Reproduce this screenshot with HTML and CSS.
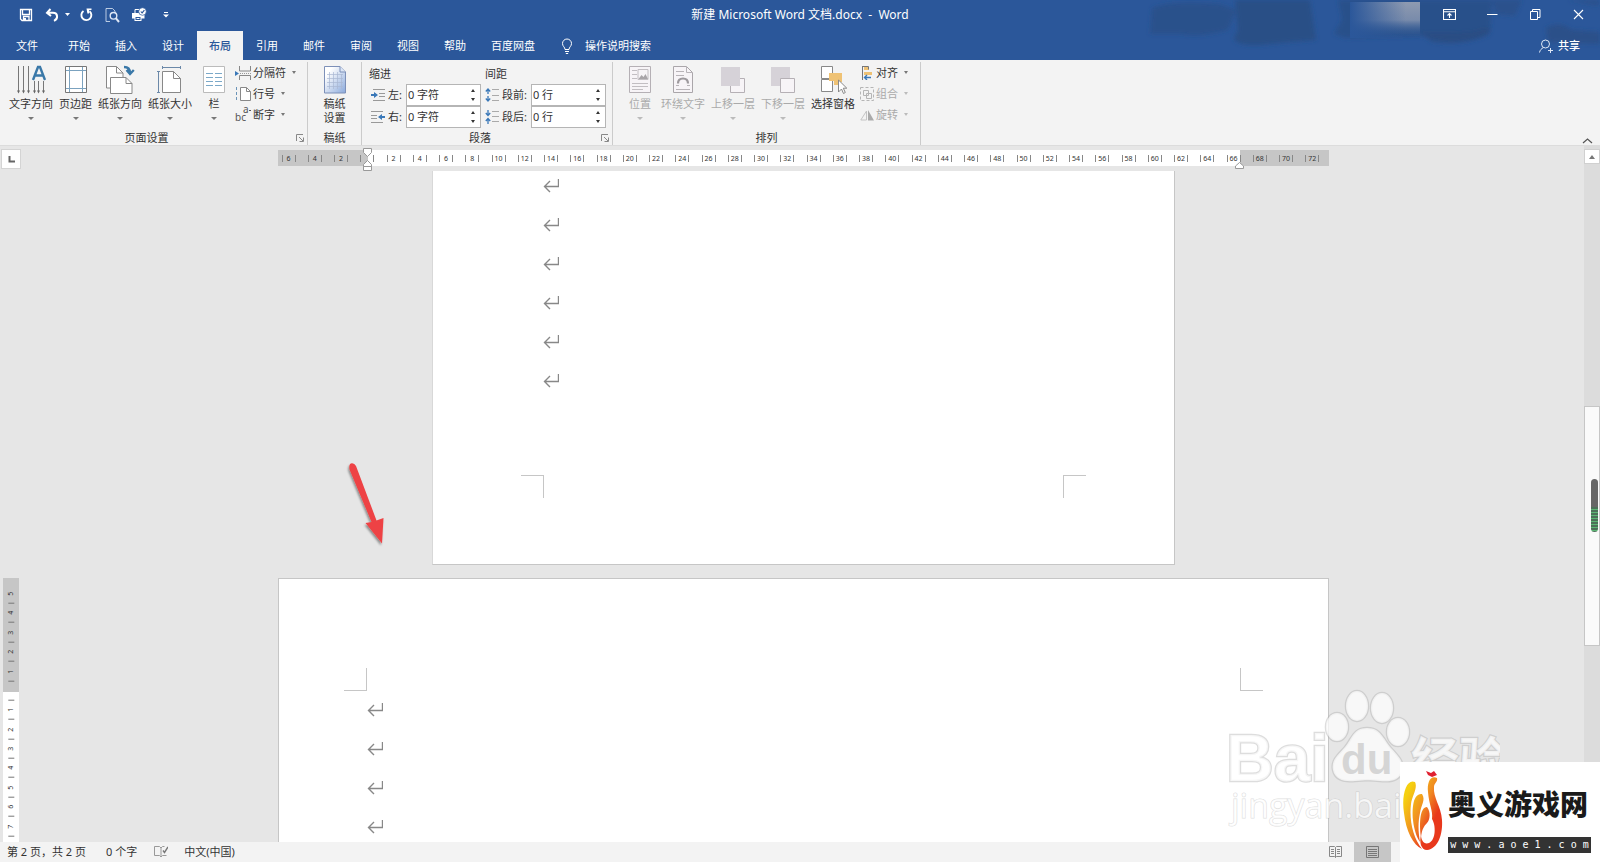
FILE: index.html
```html
<!DOCTYPE html>
<html lang="zh-CN">
<head>
<meta charset="utf-8">
<title>新建 Microsoft Word 文档.docx - Word</title>
<link rel="stylesheet" href="styles.css">
</head>
<body>
<div class="app">
  <header class="header">
    <svg class="header-art" width="480" height="60" viewBox="0 0 480 60" aria-hidden="true">
      <defs>
        <filter id="soft"><feGaussianBlur stdDeviation="2"/></filter>
        <linearGradient id="fadeV" x1="0" y1="0" x2="0" y2="1"><stop offset="0" stop-color="#9aa3b5" stop-opacity=".9"/><stop offset=".5" stop-color="#8d9ab3" stop-opacity=".8"/><stop offset="1" stop-color="#2b579a" stop-opacity="0"/></linearGradient>
        <linearGradient id="fadeH" x1="0" y1="0" x2="1" y2="0"><stop offset="0" stop-color="#2b579a"/><stop offset=".25" stop-color="#2b579a" stop-opacity=".7"/><stop offset=".8" stop-color="#2b579a" stop-opacity="0"/></linearGradient>
      </defs>
      <g filter="url(#soft)" fill="#294c80">
        <path d="M32 8 Q50 0 100 4 L116 10 L108 30 Q80 38 60 34 L30 34 Z" opacity=".55"/>
        <path d="M115 0 H190 L196 40 Q170 42 140 45 Q115 46 114 38 L118 30 Z" opacity=".75"/>
        <path d="M218 0 H372 L370 32 Q350 44 330 42 L300 36 L225 38 L214 34 L222 20 Z" opacity=".6"/>
        <path d="M300 32 Q350 34 364 28 Q376 28 366 36 Q340 46 312 42 Z" opacity=".7"/>
        <path d="M372 0 H402 L395 16 L376 14 Z M448 0 H480 L478 6 Z" opacity=".5"/>
        <path d="M426 28 Q440 20 452 30 L480 32 V44 L428 42 Z" opacity=".65"/>
      </g>
      <rect x="230" y="2" width="70" height="36" fill="url(#fadeV)"/>
      <rect x="230" y="2" width="70" height="36" fill="url(#fadeH)"/>
    </svg>
    <div class="titlebar">
      <div class="quick">
        <button class="qbtn" aria-label="保存"><svg width="14" height="14" viewBox="0 0 14 14"><path d="M1.500 1.500h11v11H3l-1.500-1.500zM3.500 1.500v5h7v-5M4.500 12.500v-4h5.500v4" fill="none" stroke="#fff" stroke-width="1.300"/><path d="M5 10h2v2.500H5z" fill="#fff"/></svg></button>
        <button class="qbtn undo" aria-label="撤消"><svg width="14" height="14" viewBox="0 0 14 14"><path d="M5.500 1L2 4.800l4 3.200M2 4.800h6c5 0 5.500 6 1 8" fill="none" stroke="#fff" stroke-width="2"/></svg><svg width="5" height="3" viewBox="0 0 5 3"><path d="M0 0h5L2.500 3z" fill="#fff"/></svg></button>
        <button class="qbtn redo" aria-label="重复"><svg width="14" height="14" viewBox="0 0 14 14"><path d="M10.500 3.200A5 5 0 1 1 4.500 3" fill="none" stroke="#fff" stroke-width="1.900"/><path d="M7.500 0.500h5v1.600h-2.300l-.2 3.400H8.400z" fill="#fff"/></svg></button>
        <button class="qbtn" aria-label="打印预览"><svg width="16" height="16" viewBox="0 0 16 16" fill="none" stroke="#dfe8f6"><path d="M6 14.500H2v-13h6.500L11 4v2" stroke-width=".8"/><circle cx="9.500" cy="8.800" r="3.300" stroke-width="1.400"/><path d="M11.800 11.200L15 15" stroke-width="2"/></svg></button>
        <button class="qbtn print" aria-label="快速打印"><svg width="16" height="16" viewBox="0 0 16 16"><path d="M1 6h11l1.500 1.500v4h-3V14h-7v-2.500H1z" fill="#fff"/><path d="M4 6V2.500h5V6" fill="none" stroke="#fff"/><path d="M4.500 10h5v3h-5z" fill="#2b579a"/><path d="M5.500 11.500h3" stroke="#fff"/><circle cx="11.500" cy="4.500" r="3.800" fill="#fff" stroke="#2b579a" stroke-width=".7"/><path d="M9.800 4.500l1.300 1.400 2.300-2.800" fill="none" stroke="#2b579a" stroke-width="1.100"/></svg></button>
        <button class="qbtn more" aria-label="自定义快速访问工具栏"><svg width="6" height="6" viewBox="0 0 6 6" fill="#fff"><path d="M1 0h4v1H1zM0 2.500h6L3 5.500z"/></svg></button>
      </div>
      <h1 class="doc-title">新建 Microsoft Word 文档.docx&nbsp; -&nbsp; Word</h1>
      <div class="window-btns">
        <button aria-label="功能区显示选项"><svg width="13" height="11" viewBox="0 0 13 11" fill="none" stroke="#fff"><path d="M.5.500h12v10H.5zM.5 2.800h12M6.500 9V4.800M4.500 6.500l2-2 2 2" stroke-width="1.100"/></svg></button>
        <button aria-label="最小化"><svg width="11" height="11" viewBox="0 0 11 11"><path d="M0 5.500h10.500" stroke="#fff"/></svg></button>
        <button aria-label="还原"><svg width="11" height="11" viewBox="0 0 11 11" fill="none" stroke="#fff"><path d="M.5 2.500h7v8h-7zM2.500 2.500v-2h7.500v8H7.500"/></svg></button>
        <button aria-label="关闭"><svg width="11" height="11" viewBox="0 0 11 11"><path d="M1 1l9 9M10 1l-9 9" stroke="#fff" stroke-width="1.100"/></svg></button>
      </div>
    </div>
    <nav class="tabs">
      <button class="tab file">文件</button>
      <button class="tab">开始</button>
      <button class="tab">插入</button>
      <button class="tab">设计</button>
      <button class="tab active">布局</button>
      <button class="tab">引用</button>
      <button class="tab">邮件</button>
      <button class="tab">审阅</button>
      <button class="tab">视图</button>
      <button class="tab">帮助</button>
      <button class="tab">百度网盘</button>
      <button class="tab tell"><svg width="12" height="16" viewBox="0 0 12 16" fill="none" stroke="#fff"><path d="M4 11.500C4 9 1.500 8.500 1.500 5.500a4.500 4.500 0 0 1 9 0C10.500 8.500 8 9 8 11.500zM4 13.500h4M4.800 15.500h2.400"/></svg>操作说明搜索</button>
      <button class="tab share"><svg width="14" height="14" viewBox="0 0 14 14" fill="none" stroke="#dfe8f6"><circle cx="6.500" cy="5" r="4"/><path d="M.5 13.500C1 11 2.500 9.500 4.500 8.600M9 11.500h5M11.500 9v5"/></svg>共享</button>
    </nav>
  </header>

  <section class="ribbon" aria-label="布局">
    <div class="group">
      <div class="group-body setup">
        <button class="big"><svg width="30" height="30" viewBox="0 0 30 30"><path d="M2.500 1v25M7.500 1v25M12.500 1v25M18.500 16v10M22.500 16v10M27.500 16v10" stroke="#777" fill="none"/><path d="M1 25.500h3l-1.500 3zM6 25.500h3l-1.500 3zM11 25.500h3l-1.500 3zM17 25.500h3l-1.500 3zM21 25.500h3l-1.500 3zM26 25.500h3l-1.500 3z" fill="#666"/><path d="M17 15L22 2h2l5 13M19 10.500h8" fill="none" stroke="#3a78a8" stroke-width="2.400"/></svg><span>文字方向</span><i class="caret"></i></button>
        <button class="big"><svg width="22" height="30" viewBox="0 0 22 30" fill="none"><path d="M.5 1.500h21v26H.5z" fill="#fff" stroke="#777"/><path d="M4.500 2v25M17.500 2v25M1 5.500h20M1 23.500h20" stroke="#7ba2bf"/></svg><span>页边距</span><i class="caret"></i></button>
        <button class="big"><svg width="30" height="30" viewBox="0 0 30 30" stroke="#888" fill="#fff"><path d="M1.500 1.500h10L18 8v15H1.500z"/><path d="M11.500 1.500V8H18" fill="none"/><path d="M5.500 12.500H21l6 6v10H5.500z"/><path d="M21 12.500v6h6" fill="none"/><path d="M19 2q6 0 6 6M21.500 5l3.500 4 3.800-4" fill="none" stroke="#3a78a8" stroke-width="2.300"/></svg><span>纸张方向</span><i class="caret"></i></button>
        <button class="big"><svg width="26" height="30" viewBox="0 0 26 30" fill="none"><path d="M5.500 6.500h11l7 7v14h-18z" fill="#fff" stroke="#888"/><path d="M16.500 6.500v7h7" stroke="#888"/><path d="M5 2.500h19M5.500 1v3M23.500 1v3M1.500 6v22M0 6.500h3M0 27.500h3" stroke="#6b88a8"/></svg><span>纸张大小</span><i class="caret"></i></button>
        <button class="big columns"><svg width="22" height="30" viewBox="0 0 22 30" fill="none"><path d="M.5 1.500h21v26H.5z" fill="#fff" stroke="#bbb"/><path d="M3 8.500h7M12 8.500h7M3 12.500h7M12 12.500h7M3 16.500h7M12 16.500h7M3 20.500h7M12 20.500h7" stroke="#7ba8c8"/></svg><span>栏</span><i class="caret"></i></button>
        <div class="stack">
          <button class="small"><svg width="16" height="14" viewBox="0 0 16 14" fill="none"><path d="M4.500 0v5h11V0M4.500 14V9.500h11V14" stroke="#888"/><path d="M5 7.500h11" stroke="#999" stroke-dasharray="1 1"/><path d="M0 5l4 2.500L0 10z" fill="#3a78b8"/></svg>分隔符<i class="caret"></i></button>
          <button class="small"><svg width="16" height="14" viewBox="0 0 16 14" fill="none"><path d="M5.500.500h6l4 4v9h-10z" fill="#fff" stroke="#888"/><path d="M11.500.500v4h4" stroke="#888"/><path d="M1.500 0v14" stroke="#6b94b8" stroke-dasharray="3 2"/></svg>行号<i class="caret"></i></button>
          <button class="small"><svg class="hyphen" width="16" height="14" viewBox="0 0 16 14" fill="#555"><text x="0" y="13" class="glyph">bc</text><text x="8" y="5" class="glyph">a</text><path d="M14 2h2v1h-2z"/></svg>断字<i class="caret"></i></button>
        </div>
      </div>
      <div class="group-foot"><span>页面设置</span><button class="launcher" aria-label="页面设置对话框"><svg width="8" height="8" viewBox="0 0 8 8" fill="none" stroke="#888"><path d="M.5 7V.500H7M3 3l4 4M7.500 3.500v4h-4"/></svg></button></div>
    </div>

    <div class="group manuscript">
      <div class="group-body">
        <button class="big"><svg width="24" height="30" viewBox="0 0 24 30" fill="none"><defs><linearGradient id="pg" x1="0" y1="0" x2="1" y2="1"><stop offset=".2" stop-color="#fff"/><stop offset="1" stop-color="#8aa9dc"/></linearGradient></defs><path d="M1.500 1.500H17l5.500 5.500v21h-21z" fill="url(#pg)" stroke="#7d90b8"/><path d="M17 1.500V7h5.500" stroke="#7d90b8" fill="#dce6f6"/><path d="M4 9.500h16M4 13.500h16M4 17.500h16M4 21.500h16M6.500 7v17M10.500 7v17M14.500 7v17M18.500 9v15" stroke="#a9b8d2" stroke-width=".7"/></svg><span>稿纸</span><span>设置</span></button>
      </div>
      <div class="group-foot"><span>稿纸</span></div>
    </div>

    <div class="group paragraph">
      <div class="group-body">
        <div class="fields indent">
          <span class="field-head">缩进</span>
          <label for="il"><svg width="14" height="14" viewBox="0 0 14 14"><path d="M2 1.500h12M8 5.500h6M8 8.500h6M2 12.500h12" stroke="#999"/><path d="M0 6h3V4l4 3-4 3V8H0z" fill="#3a78b8"/></svg>左:</label>
          <div class="spin"><input id="il" type="text" value="0 字符"><span class="arrows"><button class="up" aria-label="增加"></button><button class="down" aria-label="减少"></button></span></div>
          <label for="ir"><svg width="14" height="14" viewBox="0 0 14 14"><path d="M0 1.500h12M0 5.500h6M0 8.500h6M0 12.500h12" stroke="#999"/><path d="M14 6h-3V4L7 7l4 3V8h3z" fill="#3a78b8"/></svg>右:</label>
          <div class="spin"><input id="ir" type="text" value="0 字符"><span class="arrows"><button class="up" aria-label="增加"></button><button class="down" aria-label="减少"></button></span></div>
        </div>
        <div class="fields spacing">
          <span class="field-head">间距</span>
          <label for="sb"><svg width="14" height="14" viewBox="0 0 14 14" fill="none"><path d="M7 1.500h7M7 7.500h7M7 12.500h7" stroke="#aaa"/><path d="M3 6V1M.8 3.500L3 1l2.200 2.500M3 8v5M.8 10.500L3 13l2.200-2.500" stroke="#3a78b8" stroke-width="1.300"/></svg>段前:</label>
          <div class="spin"><input id="sb" type="text" value="0 行"><span class="arrows"><button class="up" aria-label="增加"></button><button class="down" aria-label="减少"></button></span></div>
          <label for="sa"><svg width="14" height="14" viewBox="0 0 14 14" fill="none"><path d="M7 1.500h7M7 6.500h7M7 11.500h7" stroke="#aaa"/><path d="M3 0v5M.8 3L3 5.500 5.200 3M3 14V9M.8 11L3 8.500 5.200 11" stroke="#3a78b8" stroke-width="1.300"/></svg>段后:</label>
          <div class="spin"><input id="sa" type="text" value="0 行"><span class="arrows"><button class="up" aria-label="增加"></button><button class="down" aria-label="减少"></button></span></div>
        </div>
      </div>
      <div class="group-foot"><span>段落</span><button class="launcher" aria-label="段落对话框"><svg width="8" height="8" viewBox="0 0 8 8" fill="none" stroke="#888"><path d="M.5 7V.500H7M3 3l4 4M7.500 3.500v4h-4"/></svg></button></div>
    </div>

    <div class="group arrange">
      <div class="group-body">
        <button class="big position" disabled><svg width="22" height="30" viewBox="0 0 22 30" fill="none"><path d="M.5 1.500h21v26H.5z" fill="#f7f4f7" stroke="#b5b0b5"/><path d="M3 5.500h5M3 9.500h5M3 13.500h5M3 18.500h16M3 21.500h16M3 24.500h11" stroke="#c2bec2"/><path d="M9 4.500h10v10H9z" stroke="#c2bec2"/><path d="M9.500 14l3-4 2 2 2-3 2.500 5z" fill="#a9a5a9"/></svg><span>位置</span><i class="caret"></i></button>
        <button class="big" disabled><svg width="20" height="30" viewBox="0 0 20 30" fill="none"><path d="M.5 1.500h13l6 6v20H.5z" fill="#f7f4f7" stroke="#aaa6aa"/><path d="M13.500 1.500v6h6M3 6.500h8M3 10.500h8M3 20.500h3M14 20.500h3M3 24.500h14" stroke="#b8b4b8"/><path d="M5 18.500q0-5 5-5t5 5" stroke="#9d999d" stroke-width="2.200"/></svg><span>环绕文字</span><i class="caret"></i></button>
        <button class="big" disabled><svg width="26" height="30" viewBox="0 0 26 30"><path d="M10.500 13.500h14v14h-14z" fill="#f7f4f7" stroke="#b5b0b5"/><path d="M1 2h19v19H1z" fill="#d6d2d8"/></svg><span>上移一层</span><i class="caret"></i></button>
        <button class="big" disabled><svg width="26" height="30" viewBox="0 0 26 30"><path d="M1 2h19v19H1z" fill="#d6d2d8"/><path d="M10.500 13.500h14v14h-14z" fill="#f7f4f7" stroke="#b5b0b5"/></svg><span>下移一层</span><i class="caret"></i></button>
        <button class="big"><svg width="28" height="30" viewBox="0 0 28 30"><path d="M2.500 1.500h11v12h-11zM2.500 14.500h11v12h-11z" fill="#fff" stroke="#888"/><path d="M10 8h13v9h-4v3h-4v-4h-5z" fill="#efc274"/><path d="M19.500 15v12l3-3 2 4.500 1.800-1-2-4.300h3.500z" fill="#fff" stroke="#888"/></svg><span>选择窗格</span></button>
        <div class="stack">
          <button class="small"><svg width="14" height="14" viewBox="0 0 14 14" fill="none"><path d="M2.500 0v14" stroke="#777"/><path d="M4 1h5v3H4zM4 6h8v3H4z" fill="#efc274"/><path d="M2.500.500h6v3" stroke="#777"/><path d="M11 11.500H5M7 9l-2.500 2.500L7 14" stroke="#3a78b8" stroke-width="1.400"/></svg>对齐<i class="caret"></i></button>
          <button class="small" disabled><svg width="14" height="14" viewBox="0 0 14 14" fill="none" stroke="#b5b5b5"><path d="M.5.500h13v13H.5z" stroke-dasharray="3 2"/><path d="M3.500 3.500h5v5h-5zM6.500 6.500h5v5h-5z"/></svg>组合<i class="caret"></i></button>
          <button class="small" disabled><svg width="14" height="14" viewBox="0 0 14 14" fill="none"><path d="M6.500 3v9H.8z" stroke="#c4c4c4"/><path d="M8 2v10.500h6z" fill="#aaa"/></svg>旋转<i class="caret"></i></button>
        </div>
      </div>
      <div class="group-foot"><span>排列</span></div>
    </div>
    <button class="collapse" aria-label="折叠功能区"><svg width="11" height="6" viewBox="0 0 11 6"><path d="M1 5l4.500-4L10 5" fill="none" stroke="#555" stroke-width="1.200"/></svg></button>
  </section>

  <main class="workspace">
    <div class="document">
      <div class="corner"><button class="tabstop" aria-label="制表符"><svg width="7" height="7" viewBox="0 0 7 7"><path d="M1.500 0v5.500H7" fill="none" stroke="#666" stroke-width="2"/></svg></button></div>
      <div class="ruler-row">
        <div class="hruler">
          <div class="hticks">
            <span>6</span><span>4</span><span>2</span><span></span><span>2</span><span>4</span><span>6</span><span>8</span><span>10</span><span>12</span><span>14</span><span>16</span><span>18</span><span>20</span><span>22</span><span>24</span><span>26</span><span>28</span><span>30</span><span>32</span><span>34</span><span>36</span><span>38</span><span>40</span><span>42</span><span>44</span><span>46</span><span>48</span><span>50</span><span>52</span><span>54</span><span>56</span><span>58</span><span>60</span><span>62</span><span>64</span><span>66</span><span>68</span><span>70</span><span>72</span>
          </div>
          <svg class="marker left" width="9" height="24" viewBox="0 0 9 24" fill="#fff" stroke="#999"><path d="M.5.500h8v4l-4 4-4-4zM4.500 12.500l4 4v2h-8v-2zM.5 18.500h8v4h-8z"/></svg>
          <svg class="marker right" width="9" height="7" viewBox="0 0 9 7" fill="#fff" stroke="#999"><path d="M4.500.500l4 3.500v2.500h-8V4z"/></svg>
        </div>
      </div>

      <div class="sheet-row">
        <article class="page portrait">
          <p><svg class="ret"><use href="#ret"/></svg></p><p><svg class="ret"><use href="#ret"/></svg></p><p><svg class="ret"><use href="#ret"/></svg></p><p><svg class="ret"><use href="#ret"/></svg></p><p><svg class="ret"><use href="#ret"/></svg></p><p><svg class="ret"><use href="#ret"/></svg></p>
          <div class="crops bottom"><i></i><i></i></div>
        </article>
      </div>

      <div class="vruler">
        <span>5</span><span>4</span><span>3</span><span>2</span><span>1</span><span></span><span>1</span><span>2</span><span>3</span><span>4</span><span>5</span><span>6</span><span>7</span>
      </div>
      <div class="sheet-row">
        <article class="page landscape">
          <div class="crops top"><i></i><i></i></div>
          <p><svg class="ret"><use href="#ret"/></svg></p><p><svg class="ret"><use href="#ret"/></svg></p><p><svg class="ret"><use href="#ret"/></svg></p><p><svg class="ret"><use href="#ret"/></svg></p>
        </article>
      </div>
    </div>

    <div class="scrollbar">
      <button class="scroll-up" aria-label="向上滚动"><svg width="6" height="4" viewBox="0 0 6 4"><path d="M0 4l3-4 3 4z" fill="#777"/></svg></button>
      <div class="thumb"><span class="gauge"></span></div>
    </div>

    <svg class="pointer" width="50" height="90" viewBox="0 0 50 90" aria-hidden="true">
      <defs><filter id="shade" x="-30%" y="-10%" width="160%" height="130%"><feDropShadow dx="-1" dy="2" stdDeviation="1.200" flood-color="#000" flood-opacity=".4"/></filter></defs>
      <path d="M10.500 8.500Q9.500 2.500 13 2.300Q15.500 2.200 17 5L37.500 59.500l7-2.500L43 82.500 26.500 62l6-1z" fill="#ee4344" filter="url(#shade)"/>
    </svg>
  </main>

  <footer class="status">
    <span class="pages">第 2 页，共 2 页</span>
    <span class="words">0 个字</span>
    <svg class="proof" width="14" height="12" viewBox="0 0 14 12" fill="none" stroke="#999"><path d="M7 2L5.500.500h-5v9h5L7 11l1.500-1.500h4M7 2v9M7 2L8.500.500h2"/><path d="M9 4.500l1.500 2L14 1" stroke="#777" stroke-width="1.400"/></svg>
    <span>中文(中国)</span>
    <button class="view read" aria-label="阅读视图"><svg width="13" height="12" viewBox="0 0 13 12" fill="none" stroke="#888"><path d="M.5.500h5l1 1 1-1h5v10h-5l-1 1-1-1h-5zM6.500 1.500v10M2 3.500h3M2 5.500h3M2 7.500h3M8 3.500h3M8 5.500h3M8 7.500h3"/></svg></button>
    <button class="view on" aria-label="页面视图"><svg width="13" height="12" viewBox="0 0 13 12" fill="none" stroke="#777"><path d="M.5.500h12v11H.5zM2 3.500h9M2 5.500h9M2 7.500h9M2 9.500h9"/></svg></button>
  </footer>

  <svg class="watermark" width="300" height="170" viewBox="0 0 300 170">
    <g class="wm-shape">
      <ellipse cx="137" cy="50" rx="11" ry="14"/>
      <ellipse cx="157" cy="29" rx="11" ry="15"/>
      <ellipse cx="182" cy="31" rx="11" ry="15"/>
      <ellipse cx="198" cy="55" rx="11" ry="14"/>
      <path d="M167 51c14 0 16 11 24 20s13 13 11 23-13 11-22 10-15-1-25 0-20-1-22-11 5-15 12-23 8-19 22-19z"/>
      <text x="26" y="104" class="wm-brand">Bai</text>
      <text x="211" y="100" class="wm-cn">经验</text>
      <text x="31" y="141" class="wm-url">jingyan.bai</text>
    </g>
    <text x="141" y="97" class="wm-du">du</text>
  </svg>

  <aside class="badge">
    <svg width="42" height="82" viewBox="0 0 42 82" aria-hidden="true">
      <defs><linearGradient id="fire" gradientUnits="userSpaceOnUse" x1="2" y1="30" x2="40" y2="48"><stop offset="0" stop-color="#f5d010"/><stop offset=".5" stop-color="#f08a22"/><stop offset=".85" stop-color="#e8381c"/></linearGradient></defs>
      <g fill="url(#fire)">
        <path d="M13 12C5 8-1 24 2 43c2 18 9 32 18 36C11 68 7 50 9 34c1-8 7-16 4-22z"/>
        <path d="M20 24c-9-1-10 14-9 26 1 10 4 18 7 22-2-11-2-20 0-29 1-8 6-13 2-19z"/>
        <path d="M25 37c-7 0-8 16-6 30 1-8 3-11 6-14s4-11 0-16z"/>
        <path d="M35 8c-7-3-10 5-9 14 1 13 5 18 4 27 4 6 4 21-3 24-5 2-8-3-8-8-2 7 0 15 6 15 11-1 16-16 15-30C39 36 31 28 32 17c0-4 4-5 3-9z"/>
      </g>
      <path d="M24 1l5 2 3-2 3 4-5 2-4-2z" fill="#e02030"/>
    </svg>
    <div class="badge-text"><strong>奥义游戏网</strong><span>w w w . a o e 1 . c o m</span></div>
  </aside>
</div>
<svg width="0" height="0" class="defs" aria-hidden="true"><symbol id="ret" viewBox="0 0 16 16"><path d="M15.500 1v7.500H1.500M7 3L1.500 8.500 7 14" fill="none" stroke="#888" stroke-width="1.400"/></symbol></svg>
</body>
</html>
```

FILE: styles.css
```css
* { box-sizing: border-box; }
body {
  margin: 0;
  font-family: "Noto Sans", "Noto Sans CJK SC", sans-serif;
  font-size: 11px;
  line-height: 14px;
  color: #333;
}
button {
  margin: 0;
  padding: 0;
  border: 0;
  background: none;
  font: inherit;
  color: inherit;
  display: flex;
  align-items: center;
  justify-content: center;
}
svg { flex: none; display: block; }
p { margin: 0; }
.defs { position: absolute; }

.app {
  position: relative;
  display: flex;
  flex-direction: column;
  height: 100vh;
  overflow: hidden;
}

/* title bar and tabs */
.header { position: relative; background: #2b579a; color: #fff; }
.header-art { position: absolute; top: 0; right: 0; }
.titlebar {
  position: relative;
  display: grid;
  grid-template-columns: 1fr auto 1fr;
  align-items: center;
  height: 31px;
  padding-bottom: 2px;
}
.quick { display: flex; align-items: center; padding-left: 19px; }
.qbtn { margin-right: 12px; }
.qbtn.undo { gap: 6px; margin-right: 9px; }
.qbtn.redo { margin-right: 11px; }
.qbtn.print { margin-right: 16px; }
.quick .qbtn:nth-child(4) { margin-right: 11px; }
.doc-title { margin: 0; font-size: 12px; font-weight: 400; line-height: 16px; }
.window-btns { display: flex; justify-content: flex-end; gap: 1px; padding-right: 1px; }
.window-btns button { width: 42px; height: 28px; }
.tabs { position: relative; display: flex; height: 29px; padding-left: 4px; gap: 1px; }
.tab { padding: 0 12px; }
.tab.file { margin-right: 5px; }
.tab.active { background: #f3f3f3; color: #2b579a; font-weight: 500; }
.tab.tell { gap: 12px; padding-left: 13px; }
.tab.share { margin-left: auto; gap: 5px; padding-right: 20px; font-weight: 500; }

/* ribbon */
.ribbon {
  position: relative;
  display: flex;
  height: 86px;
  padding: 2px 0 0;
  background: #f3f3f3;
  border-bottom: 1px solid #dcdcdc;
}
.group { display: flex; flex-direction: column; border-right: 1px solid #cbcbcb; }
.group-body { display: flex; flex: 1; }
.group-foot { display: flex; position: relative; justify-content: center; height: 15px; line-height: 15px; }
.group-foot > span { padding-right: 14px; }
.manuscript .group-foot > span { padding: 0; }
.launcher { position: absolute; right: 3px; top: 4px; }
.setup { padding: 0 11px 0 8px; gap: 4px; }
.big { flex-direction: column; justify-content: flex-start; padding: 3px 1px 0; }
.big svg { margin-bottom: 2px; }
.big.columns { width: 34px; }
.big .caret { margin-top: 6px; border-width: 3px 3px 0; }
.caret { border: 0 solid transparent; border-width: 3px 2px 0; border-top-color: #777; }
.stack { display: flex; flex-direction: column; }
.small { justify-content: flex-start; height: 21px; gap: 2px; }
.small .caret { margin-left: 4px; }
.hyphen { overflow: visible; }
.glyph { font: 10px "Noto Sans", sans-serif; }
button:disabled { color: #aaa; }
button:disabled .caret { border-top-color: #bbb; }
.manuscript { width: 54px; }
.manuscript .group-body { justify-content: center; }
.paragraph .group-body { padding: 0 6px 0 7px; gap: 4px; }
.fields {
  display: grid;
  grid-template-columns: auto 75px;
  grid-template-rows: 21px 22px 22px;
  column-gap: 4px;
  align-items: center;
  align-content: start;
  padding-top: 1px;
}
.fields label { display: flex; align-items: center; gap: 3px; white-space: nowrap; }
.fields.indent label { padding-left: 2px; }
.field-head { grid-column: 1 / 3; }
.spin { display: flex; height: 22px; border: 1px solid #b5b5b5; background: #fff; }
.spin input {
  flex: 1;
  min-width: 0;
  padding: 0 1px;
  border: 0;
  background: none;
  font: inherit;
  color: inherit;
}
.arrows { display: flex; flex-direction: column; justify-content: center; gap: 6px; width: 14px; }
.up, .down { width: 0; height: 0; margin: 0 auto; border: 2px solid transparent; }
.up { border-top: 0; border-bottom: 3px solid #333; }
.down { border-bottom: 0; border-top: 3px solid #333; }
.arrange .group-body { padding: 0 12px 0 15px; gap: 4px; }
.arrange .group-foot > span { padding: 0; }
.big.position { margin-right: 4px; }
.collapse { position: absolute; right: 7px; bottom: 1px; }

/* editing area */
.workspace { position: relative; display: flex; flex: 1; min-height: 0; background: #e6e6e6; }
.document {
  flex: 1;
  min-width: 0;
  display: grid;
  grid-template-columns: 24px 1fr;
  grid-template-rows: 25px 407px 1fr;
  padding-right: 2px;
  overflow: hidden;
}
.corner { padding: 3px 1px; }
.tabstop { width: 20px; height: 20px; background: #fff; border: 1px solid #d4d4d4; }
.ruler-row { display: flex; justify-content: center; padding-top: 4px; }
.hruler {
  position: relative;
  width: 1051px;
  height: 16px;
  background: linear-gradient(to right, #c6c6c6 90px, #fff 90px, #fff 962px, #c6c6c6 962px);
}
.hticks {
  display: grid;
  grid-template-columns: repeat(40, 1fr);
  justify-items: center;
  align-items: center;
  height: 16px;
  margin: 0 3px 0 -2px;
}
.hticks span {
  width: 14px;
  height: 7px;
  border: 1px solid #888;
  border-width: 0 1px;
  font-size: 7px;
  line-height: 7px;
  text-align: center;
}
.marker { position: absolute; }
.marker.left { left: 85px; top: -2px; }
.marker.right { left: 957px; top: 12px; }
.sheet-row { grid-column: 2; display: flex; justify-content: center; min-height: 0; }
.page { background: #fff; border: 1px solid #c6c6c6; overflow: hidden; }
.page p { display: flex; align-items: center; height: 39px; }
.ret { width: 16px; height: 16px; }
.portrait { width: 743px; height: 394px; border-top: 0; border-left-color: #d8d8d8; }
.portrait p { padding-left: 110px; }
.portrait p:first-child { height: 34px; padding-bottom: 5px; }
.landscape { width: 1051px; border-bottom: 0; }
.landscape p { padding-left: 88px; }
.crops { display: flex; justify-content: space-between; }
.crops i { width: 23px; height: 23px; border: 0 solid #c6c6c6; }
.crops.bottom { padding: 0 88px; margin-top: 75px; }
.crops.bottom i { border-top-width: 1px; }
.crops.top { height: 111px; padding: 89px 65px 0; }
.crops.top i { border-bottom-width: 1px; }
.crops i:first-child { border-right-width: 1px; }
.crops i:last-child { border-left-width: 1px; }
.vruler {
  grid-column: 1;
  display: grid;
  grid-template-rows: repeat(13, 1fr);
  width: 16px;
  margin-left: 3px;
  padding: 6px 0;
  background: linear-gradient(#c6c6c6 114px, #fff 114px);
}
.vruler span {
  position: relative;
  display: flex;
  align-items: center;
  justify-content: center;
  font-size: 7px;
  line-height: 7px;
  transform: rotate(-90deg);
}
.vruler span::after {
  content: "";
  position: absolute;
  left: -2px;
  top: 50%;
  width: 1px;
  height: 6px;
  margin-top: -3px;
  background: #777;
}

.scrollbar { display: flex; flex-direction: column; width: 16px; padding-top: 3px; background: #dcdcdc; }
.scroll-up { height: 15px; background: #fff; border: 1px solid #d0d0d0; }
.thumb {
  display: flex;
  align-items: center;
  justify-content: flex-end;
  height: 240px;
  margin-top: 242px;
  padding: 0 1px 42px 0;
  background: #fafafa;
  border: 1px solid #c6c6c6;
}
.gauge {
  width: 7px;
  height: 53px;
  border-radius: 4px;
  background: linear-gradient(#666 28px, transparent 28px), repeating-linear-gradient(#5cb574 0 1px, #4c7058 1px 3px);
}
.pointer { position: absolute; left: 339px; top: 315px; }

/* status bar */
.status { display: flex; align-items: center; height: 20px; padding: 0 209px 0 7px; background: #f3f3f3; }
.pages { margin-right: 20px; }
.words { margin-right: 17px; }
.proof { margin-right: 16px; }
.view { height: 20px; width: 37px; }
.view.read { margin-left: auto; }
.view.on { background: #c6c6c6; }

/* overlays */
.watermark { position: absolute; right: 100px; bottom: 15px; }
.wm-shape {
  fill: #fff;
  fill-opacity: .72;
  stroke: #aaa;
  stroke-opacity: .4;
  stroke-width: 2.500px;
  paint-order: stroke;
}
.wm-brand { font: bold 66px "Liberation Sans", sans-serif; }
.wm-cn { font: bold 48px "Noto Sans CJK SC", sans-serif; }
.wm-url { font: 34px "Open Sans", sans-serif; stroke-width: 1px; }
.wm-du { font: bold 42px "Liberation Sans", sans-serif; fill: #ccc; fill-opacity: .8; }
.badge {
  position: absolute;
  right: 0;
  bottom: 0;
  display: flex;
  width: 200px;
  height: 100px;
  padding: 8px 0 0 2px;
  gap: 4px;
  background: #fff;
}
.badge-text { display: flex; flex-direction: column; width: 143px; }
.badge-text strong { font: 900 28px/67px "Noto Sans CJK SC", sans-serif; color: #1a1a1a; white-space: nowrap; }
.badge-text span {
  background: #333;
  color: #fff;
  font: 10px/16px "DejaVu Sans Mono", monospace;
  text-align: center;
  white-space: nowrap;
}
```
